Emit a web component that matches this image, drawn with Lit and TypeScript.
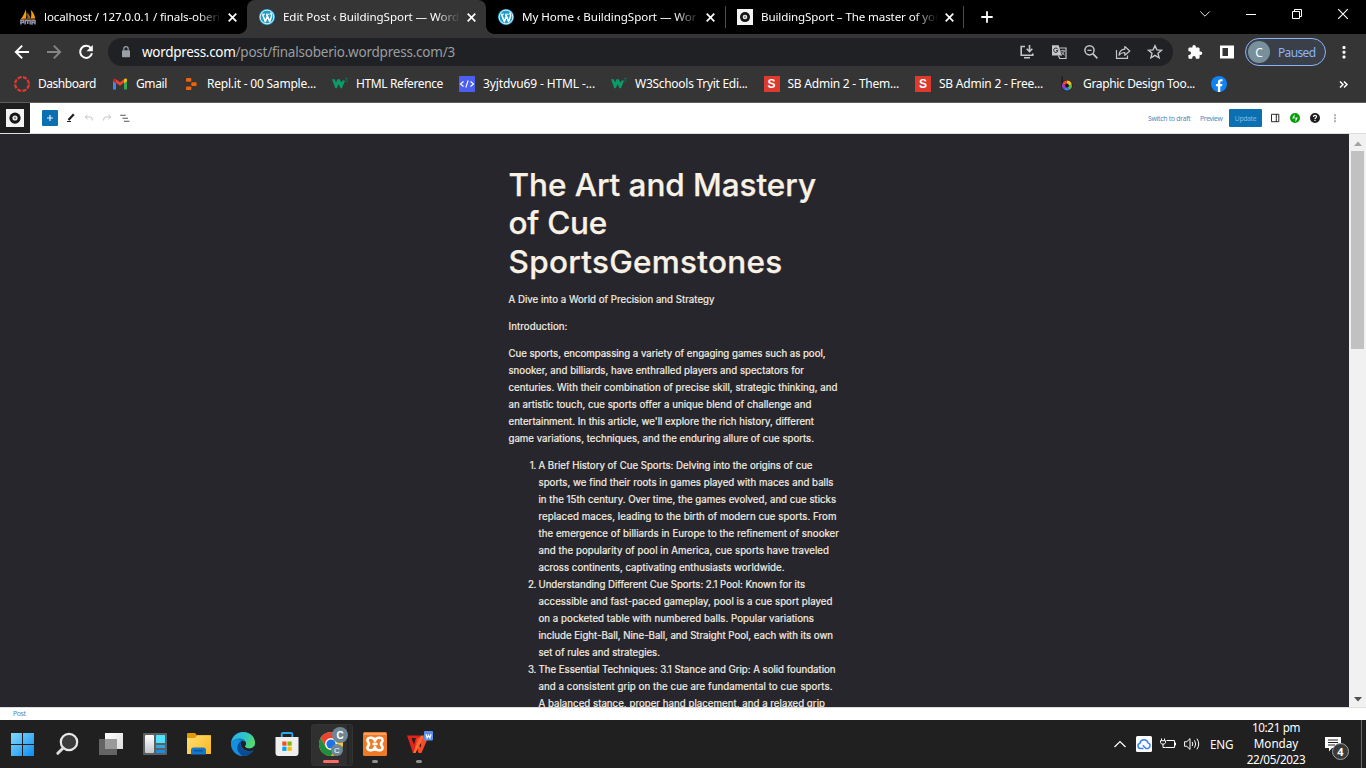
import { LitElement, html, css, svg, nothing } from 'lit';
import { customElement, property, query } from 'lit/decorators.js';

/** Single line of text tracked so that it spans exactly `w` pixels. */
@customElement('fit-text')
export class FitText extends LitElement {
  @property({ type: Number }) w = 0;
  @property() text = '';
  @query('span') private line!: HTMLSpanElement;

  static styles = css`
    :host { display: block; white-space: pre; flex: none; }
  `;

  updated() {
    this.line.style.letterSpacing = '0px';
    const natural = this.line.getBoundingClientRect().width;
    const count = [...this.text].length;
    this.line.style.letterSpacing = `${(this.w - natural) / count}px`;
    this.style.width = `${this.w}px`;
  }

  render() {
    return html`<span>${this.text}</span>`;
  }
}

const fit = (text: string, w: number, cls = '') =>
  html`<fit-text class=${cls} .text=${text} .w=${w}></fit-text>`;

const icon = (w: number, h: number, body: unknown, vb?: string) =>
  html`<svg class="ic" width=${w} height=${h} viewBox=${vb ?? `0 0 ${w} ${h}`} fill="none">${body}</svg>`;

const wpIcon = icon(16, 16, svg`
  <circle cx="8" cy="8" r="8" fill="#1e9ccb"/>
  <circle cx="8" cy="8" r="6.9" fill="none" stroke="#fff" stroke-width=".9"/>
  <path d="M2.6 5.2H6M7 5.2h3.6" stroke="#fff" stroke-width="1"/>
  <path d="M3.6 5.4 6.3 12.8 8.3 7.2 7.6 5.4M8.3 6.4 10.6 12.8 12.5 7.2C13 5.4 11.6 5.2 11.8 3.6" stroke="#fff" stroke-width="1.5" stroke-linejoin="round"/>`);

const ballIcon = (s: number) => icon(s, s, svg`
  <rect width="16" height="16" fill="#f4f4f4"/>
  <circle cx="8" cy="8.1" r="5" fill="#151515"/>
  <circle cx="8" cy="8" r="2.3" fill="#e9e9e9"/>
  <ellipse cx="8" cy="8" rx=".8" ry="1.2" fill="#777"/>`, '0 0 16 16');

const pmaIcon = icon(16, 16, svg`
  <path d="M5.6 .8C4.800 4 3 7 1 9.900l4.800-.4C6.800 6.500 6.600 3.500 5.600.800Z" fill="#f89c0e"/>
  <path d="M7.200 3.500 7.500 9.500l2.800-.2C10 7 8.800 5 7.200 3.500Z" fill="#a86a20"/>
  <path d="M10.600.800C11.600 3.500 11.500 6.500 10.800 9.500l4.400-.3C14.600 6 13 3 10.600.800Z" fill="#f89c0e"/>
  <path d="M.9 15.600V11.300h2.500v2.300H.9M5.200 15.600V11.400h5v4.200M7.700 11.500v3.500M12 15.800v-4.400h3v4.200M12 13.600h3" stroke="#8f91ad" stroke-width="1.500"/>
  <path d="M1 10h14" stroke="#d8872a" stroke-width=".8"/>`);

const closeIcon = icon(9, 9, svg`<path d="M.7.700 8.300 8.300M8.300.700.7 8.300" stroke="#fff" stroke-width="1.700"/>`);

const w3Icon = icon(16, 16, svg`
  <path d="M0 3.300h2.600l1.500 3.200 1.300-3.200h2.400l1.500 3.200L10.500 4.500h2.600L10 12.300H8.600L6.700 8.300l-2 4H3.300Z" fill="#0a9c68"/>
  <path d="M13 2.300h2.200L14.200 3.800q1.400.100 1.100 1.200-.5 1-2 .500" stroke="#08784f" stroke-width=".9"/>`);

const sIcon = html`<span class="sico">S</span>`;

const bookmarks: { label: string; w: number; icon: unknown }[] = [
  {
    label: 'Dashboard', w: 58,
    icon: icon(16, 16, svg`<circle cx="8" cy="8" r="6.900" stroke="#e23a30" stroke-width="2.200" stroke-dasharray="4.100 1.319" transform="rotate(6 8 8)"/>`),
  },
  {
    label: 'Gmail', w: 31,
    icon: icon(16, 16, svg`
      <path d="M1 13.500V4.500l3 2.200v6.800Z" fill="#4285f4"/><path d="M12 13.500V6.700l3-2.200v9Z" fill="#34a853"/>
      <path d="M4 6.800V3.300l4 3 4-3v3.500L8 9.800Z" fill="#ea4335"/>
      <path d="M1 5.200V4c0-1.600 1.700-1.900 3-.700v3.900Z" fill="#c5221f"/><path d="M15 5.200V4c0-1.600-1.700-1.900-3-.700v3.900Z" fill="#fbbc04"/>`),
  },
  {
    label: 'Repl.it - 00 Sample...', w: 109,
    icon: icon(16, 16, svg`<g fill="#f26207"><rect x="3" y="2" width="5.300" height="3.700" rx=".9"/><rect x="8.300" y="6.200" width="5.300" height="3.700" rx=".9"/><rect x="3" y="10.400" width="5.300" height="3.700" rx=".9"/></g>`),
  },
  { label: 'HTML Reference', w: 87, icon: w3Icon },
  {
    label: '3yjtdvu69 - HTML -...', w: 112,
    icon: icon(16, 16, svg`<rect width="16" height="16" rx="1" fill="#4d5ff0"/><path d="M4.500 5.500 1.500 8l3 2.500M11.500 5.500l3 2.500-3 2.500M9.200 4.500l-2.400 7" stroke="#fff" stroke-width="1.100"/>`),
  },
  { label: 'W3Schools Tryit Edi...', w: 112.5, icon: w3Icon },
  { label: 'SB Admin 2 - Them...', w: 111.5, icon: sIcon },
  { label: 'SB Admin 2 - Free...', w: 104, icon: sIcon },
  {
    label: 'Graphic Design Too...', w: 112,
    icon: icon(16, 16, svg`
      <path d="M3.200.500V9" stroke="#17191d" stroke-width="1.300"/><circle cx="8" cy="9.600" r="5.600" fill="#17191d"/>
      <g stroke-width="3" fill="none">
      <path d="M8 6.100A3.500 3.500 0 0 1 11.400 8.800" stroke="#f5c518"/><path d="M11.400 8.800A3.500 3.500 0 0 1 9.600 12.700" stroke="#57b947"/>
      <path d="M9.600 12.700A3.500 3.500 0 0 1 5.600 12.100" stroke="#3d7fe0"/><path d="M5.600 12.100A3.500 3.500 0 0 1 4.800 8.200" stroke="#a23bc4"/>
      <path d="M4.800 8.200A3.500 3.500 0 0 1 8 6.100" stroke="#ee4b2b"/></g>`),
  },
  {
    label: '', w: 0,
    icon: icon(16, 16, svg`<circle cx="8" cy="8" r="8" fill="#0f82f5"/><path d="M6.900 16V10.300H4.900V8h2V6.400C6.900 4.300 8.100 3.200 10 3.200l1.600.1v2h-1c-1 0-1.300.5-1.300 1.200V8h2.200l-.4 2.300H9.300V16Z" fill="#fff"/>`),
  },
];

const tabs = [
  { label: 'localhost / 127.0.0.1 / finals-oberi', w: 176, icon: pmaIcon, cls: '' },
  { label: 'Edit Post ‹ BuildingSport — Word', w: 176, icon: wpIcon, cls: 'active' },
  { label: 'My Home ‹ BuildingSport — Wor', w: 174.5, icon: wpIcon, cls: '' },
  { label: 'BuildingSport – The master of you', w: 181, icon: ballIcon(16), cls: 'sep' },
];

const omniIcons = [
  icon(16, 16, svg`<path d="M6 2.500H2.200v8.700h11.600V9.500M5 13.800h6" stroke="#c4c6c9" stroke-width="1.600"/><path d="M10.500 1v6.500M7.700 4.800l2.800 2.900 2.800-2.900" stroke="#c4c6c9" stroke-width="1.600"/>`),
  icon(16, 16, svg`<path d="M1 1.200h6.700l3 10.300H1Z" fill="#c4c6c9"/><path d="M8.500 4H15v10.500H8.700l-1.300-3" stroke="#c4c6c9" stroke-width="1.200"/><path d="M6.800 5.200A2.200 2.200 0 1 0 7 6.700H5" stroke="#202124" stroke-width="1"/><path d="M9.500 6.800h4.500M11.700 5.800v1M13.200 7c-.4 2-1.600 3.400-3 4.200M10.600 8c.6 1.400 1.700 2.400 3 3" stroke="#c4c6c9" stroke-width=".9"/>`),
  icon(16, 16, svg`<circle cx="6.500" cy="6.300" r="4.600" stroke="#c4c6c9" stroke-width="1.500"/><path d="M9.800 9.700 14.400 14.300" stroke="#c4c6c9" stroke-width="1.800"/><path d="M4.400 6.300h4.200" stroke="#c4c6c9" stroke-width="1.200"/>`),
  icon(16, 16, svg`<path d="M1.500 6v8.300h11V11.500" stroke="#c4c6c9" stroke-width="1.200"/><path d="M4 11.200C4.300 7.500 6.600 5.500 9.800 5.200V2.500l5 4.500-5 4.300V8.500C7.300 8.500 5.400 9.300 4 11.200Z" stroke="#c4c6c9" stroke-width="1.200" stroke-linejoin="round"/>`),
  icon(16, 16, svg`<path d="m8 1.700 1.900 4.200 4.600.4-3.500 3 1.100 4.500L8 11.400l-4.100 2.400L5 9.300l-3.500-3 4.600-.4Z" stroke="#c4c6c9" stroke-width="1.400"/>`),
];

const para: [string, number][] = [
  ['Cue sports, encompassing a variety of engaging games such as pool,', 317],
  ['snooker, and billiards, have enthralled players and spectators for', 295.5],
  ['centuries. With their combination of precise skill, strategic thinking, and', 329],
  ['an artistic touch, cue sports offer a unique blend of challenge and', 303],
  ["entertainment. In this article, we'll explore the rich history, different", 305.5],
  ['game variations, techniques, and the enduring allure of cue sports.', 305.5],
];

const items: [string, number][][] = [
  [
    ['A Brief History of Cue Sports: Delving into the origins of cue', 274],
    ['sports, we find their roots in games played with maces and balls', 295],
    ['in the 15th century. Over time, the games evolved, and cue sticks', 297.5],
    ['replaced maces, leading to the birth of modern cue sports. From', 298],
    ['the emergence of billiards in Europe to the refinement of snooker', 300.5],
    ['and the popularity of pool in America, cue sports have traveled', 290.5],
    ['across continents, captivating enthusiasts worldwide.', 246],
  ],
  [
    ['Understanding Different Cue Sports: 2.1 Pool: Known for its', 266.5],
    ['accessible and fast-paced gameplay, pool is a cue sport played', 294],
    ['on a pocketed table with numbered balls. Popular variations', 275.5],
    ['include Eight-Ball, Nine-Ball, and Straight Pool, each with its own', 294.5],
    ['set of rules and strategies.', 121.5],
  ],
  [
    ['The Essential Techniques: 3.1 Stance and Grip: A solid foundation', 297],
    ['and a consistent grip on the cue are fundamental to cue sports.', 294],
    ['A balanced stance, proper hand placement, and a relaxed grip', 286.5],
  ],
];

const taskIcons: { body: unknown; cls?: string }[] = [
  {
    body: icon(24, 24, svg`
      <defs><linearGradient id="win" x1="0" y1="0" x2="24" y2="24" gradientUnits="userSpaceOnUse"><stop stop-color="#86dcfb"/><stop offset="1" stop-color="#0a8bf2"/></linearGradient></defs>
      <path d="M0 1h11v11H0ZM12 1h11v11H12ZM0 13h11v11H0ZM12 13h11v11H12Z" fill="url(#win)"/>`),
  },
  { body: icon(24, 24, svg`<circle cx="14" cy="10" r="8.200" fill="#3b3b3b" stroke="#e8e8e8" stroke-width="2.200"/><path d="M8.200 16 2.800 21.300" stroke="#dcdcdc" stroke-width="3" stroke-linecap="round"/>`) },
  {
    body: icon(24, 24, svg`
      <defs><linearGradient id="tv" x1="6" y1="0" x2="24" y2="17" gradientUnits="userSpaceOnUse"><stop stop-color="#fff"/><stop offset="1" stop-color="#dcdcdc"/></linearGradient></defs>
      <rect x="0" y="7" width="18" height="16" fill="#646464"/><rect x="6" y="1" width="18" height="16" fill="url(#tv)"/><rect x="6" y="7" width="12" height="10" fill="#9a9a9a"/>`),
  },
  {
    body: icon(24, 24, svg`
      <defs><linearGradient id="wd" x1="0" y1="3" x2="0" y2="21" gradientUnits="userSpaceOnUse"><stop stop-color="#fff"/><stop offset="1" stop-color="#c2c8cd"/></linearGradient></defs>
      <rect y="1" width="24" height="22" rx="1" fill="#5d6063"/><rect x="2" y="3" width="9" height="18" rx="1" fill="url(#wd)"/>
      <rect x="13" y="3" width="9" height="8" rx=".5" fill="#4fe3ff"/><rect x="13" y="13" width="9" height="3" rx=".5" fill="#2fa8e6"/><rect x="13" y="18" width="9" height="3" rx=".5" fill="#188fe0"/>`),
  },
  {
    body: icon(24, 24, svg`
      <defs><linearGradient id="fl" x1="0" y1="3" x2="24" y2="22" gradientUnits="userSpaceOnUse"><stop stop-color="#ffdf76"/><stop offset="1" stop-color="#fbb81e"/></linearGradient></defs>
      <path d="M0 2a1 1 0 0 1 1-1h7l2 2.300h13a1 1 0 0 1 1 1V8H0Z" fill="#e09a05"/>
      <path d="M0 6h8l2.200-2.700H24V22H0Z" fill="url(#fl)"/><path d="M4 22.500V18a2.500 2.500 0 0 1 2.500-2.500h10A2.500 2.500 0 0 1 19 18v4.500Z" fill="#1278cf"/><path d="M7 18.700h9" stroke="#0c5596" stroke-width="1.500"/>`),
  },
  {
    body: icon(24, 24, svg`
      <defs><linearGradient id="e1" x1="3" y1="2" x2="24" y2="14" gradientUnits="userSpaceOnUse"><stop stop-color="#2fb4e8"/><stop offset=".5" stop-color="#2fc7bc"/><stop offset="1" stop-color="#63e04d"/></linearGradient></defs>
      <circle cx="12" cy="12" r="12" fill="#0f6fc4"/>
      <path d="M.1 10.500C1.500 3.500 6.500 0 12.200 0 19.500 0 24 5.300 24 10.800c0 3.500-2.700 5.700-6 5.700-2.800 0-4.300-1.200-4-2.300.3-.9 1-1.300 1-2.800 0-2.500-2.500-4.800-6.600-4.800C4.600 6.600 1.500 8.500.1 10.500Z" fill="url(#e1)"/>
      <path d="M.1 10.500C-.5 17 4.500 23.900 12 24c-3.800-1.500-6-5-5.500-9 .3-3 2-5 4-6C7 5.700 1.800 8 .1 10.500Z" fill="#1590dd"/>
      <path d="M10.300 9.300c-2.500 5 1 9.900 6.300 9.900 2.500 0 4.500-.8 6.200-2C21 21 17 24 12 24 8.500 22.500 6.200 19 6.500 15c.2-2.700 1.700-4.900 3.800-5.700Z" fill="#0b4a94"/>
      <path d="M10.400 9.200C11.800 8.800 15 9.300 15 11.500c0 1.500-1 2-1 2.800 0 1.300 2 2.200 4 2.200 2 0 4-.6 5.400-2.500l2 1.500-2.500 2.300c-1.500.9-3.500 1.400-5.500 1.300-5-.3-9-5-7-9.900Z" fill="#202020"/>`),
  },
  {
    body: icon(24, 24, svg`
      <path d="M6.700 6.500V2.200A1.200 1.200 0 0 1 7.900 1h8.200a1.200 1.200 0 0 1 1.200 1.200v4.300" stroke="#28a9ea" stroke-width="1.900"/>
      <path d="M.5 5h23v16a3 3 0 0 1-3 3h-17a3 3 0 0 1-3-3Z" fill="#efefef"/>
      <path d="M7.300 9.500h4.200v4.200H7.300Z" fill="#f25022"/><path d="M12.500 9.500h4.200v4.200h-4.200Z" fill="#7fba00"/><path d="M7.300 14.700h4.200v4.200H7.300Z" fill="#00a4ef"/><path d="M12.500 14.700h4.200v4.200h-4.200Z" fill="#ffb900"/>`),
  },
  {
    cls: 'current',
    body: html`<span class="chrome">${icon(24, 24, svg`
      <circle cx="12" cy="12" r="12" fill="#fcc934"/>
      <path d="M1.600 6A12 12 0 0 1 22.400 6H12a6 6 0 0 0-5.200 9Z" fill="#ea4335"/>
      <path d="M1.600 6A12 12 0 0 0 12 24l5.200-9A6 6 0 0 1 6.800 15Z" fill="#1e8e3e"/>
      <circle cx="12" cy="12" r="5.800" fill="#fff"/><circle cx="12" cy="12" r="4.600" fill="#1a73e8"/>`)}
      <b class="av big">C</b><b class="av small">C</b></span>`,
  },
  {
    cls: 'open',
    body: icon(24, 24, svg`
      <rect width="24" height="24" rx="1.500" fill="#ee7a26"/><rect x="1" y="1" width="22" height="2" fill="#f6a269"/>
      <path d="M12 9C12 5.500 4.500 4.200 4.500 8.200c0 2 1.500 2.300 1.500 3.800s-1.500 1.800-1.500 3.800c0 4 7.500 2.700 7.500-.8 0 3.500 7.500 4.800 7.500.8 0-2-1.500-2.300-1.500-3.800s1.500-1.800 1.500-3.800C19.500 4.200 12 5.500 12 9ZM9.500 12h5" stroke="#fff" stroke-width="2.700" stroke-linejoin="round"/>`),
  },
  {
    cls: 'open',
    body: icon(24, 24, svg`
      <path d="M0 3.500h13l1.500 3.500-2.700 6L8.500 21H6Z" fill="#e2231a"/>
      <path d="M4.500 6h4.300L7 12.500Z" fill="#202020"/>
      <path d="M10 6.500 17 4.500h4.500L14.500 21h-3L10.300 16.500 6.800 21Z" fill="#fb4b26"/>
      <path d="M6 21 13.800 3.500h3.400L8.500 21Z" fill="#ff6a2e"/><path d="m12.600 13.500 1-2.500.5 2.500-1 2.500Z" fill="#202020"/>
      <rect x="17" y="-1" width="9" height="9.500" rx="1" fill="#5b8def"/><path d="m19 2.200 1.100 4 1.400-3 1.400 3 1.100-4" stroke="#fff" stroke-width="1.100"/>`),
  },
];

@customElement('app-root')
export class AppRoot extends LitElement {
  static styles = css`
    :host {
      display: flex; flex-direction: column; width: 1366px; height: 768px; overflow: hidden;
      font-family: 'Noto Sans', 'Open Sans', sans-serif; font-size: 11.6px; color: #fff; background: #fff;
    }
    * { box-sizing: border-box; }
    .ic { display: block; flex: none; overflow: visible; }

    .tabs { display: flex; height: 34px; background: #000; padding-left: 8px; flex: none; }
    .tab { width: 239px; display: flex; align-items: center; padding-left: 12px; position: relative; flex: none; }
    .tab .label { width: 176px; margin: 0 7.5px 0 8px; overflow: hidden; line-height: 20px;
      mask-image: linear-gradient(90deg, #000 153px, transparent 177px); }
    .tab.active { background: #353535; border-radius: 8px 8px 0 0; }
    .tab.active::before, .tab.active::after { content: ''; position: absolute; bottom: 0; width: 8px; height: 8px; }
    .tab.active::before { left: -8px; background: radial-gradient(circle at 0 0, transparent 7.5px, #353535 8px); }
    .tab.active::after { right: -8px; background: radial-gradient(circle at 100% 0, transparent 7.5px, #353535 8px); }
    .tab.sep { border-left: 1px solid #4a4a4a; border-right: 1px solid #4a4a4a; padding-left: 11px;
      border-image: linear-gradient(transparent 7px, #4d4d4d 7px, #4d4d4d 27px, transparent 27px) 1; }
    .plus { padding: 10.5px 0 0 17px; }
    .win { margin-left: auto; display: flex; }
    .win > span { width: 46px; height: 28px; display: grid; place-items: center; }

    .toolbar { height: 36px; background: #353535; display: flex; align-items: center; flex: none; padding-left: 14px; }
    .nav { display: flex; gap: 16px; }
    .omni { width: 1065px; height: 28px; border-radius: 14px; background: #202124; margin-left: 14px; display: flex;
      align-items: center; padding: 0 10px 0 12px; font-size: 13.5px; }
    .omni .lock { margin-right: 10px; }
    .omni .rest { color: #9a9da1; }
    .omni .acts { margin-left: auto; display: flex; gap: 16px; }
    .ext { display: flex; gap: 16px; margin-left: 14px; }
    .pill { width: 81px; height: 28px; border: 1px solid #8ab4f8; border-radius: 14px; background: #3b3f47;
      margin-left: 10px; display: flex; align-items: center; color: #8ab4f8; font-size: 12px; }
    .pill b { width: 22px; height: 22px; border-radius: 50%; background: #78909c; color: #fff; font-weight: 400;
      display: grid; place-items: center; margin: 0 8px 0 2px; font-size: 12px; }
    .dots { margin-left: 16px; }

    .marks { height: 32px; background: #353535; display: flex; align-items: center; gap: 16px; padding: 1px 0 5px 14px;
      flex: none; font-size: 12px; }
    .chromeline { height: 1px; background: #5c5c5c; flex: none; }
    .mark { display: flex; align-items: center; gap: 8px; line-height: 18px; }
    .sico { width: 16px; height: 16px; background: #dd3a30; display: grid; place-items: center; font: bold 12px/16px 'Liberation Sans', sans-serif; }
    .more { margin-left: auto; padding-right: 18px; }

    .editbar { height: 31px; border-bottom: 1px solid #dedede; background: #fff; display: flex; align-items: center;
      flex: none; font-size: 6.8px; color: #4a8abb; }
    .site { width: 30px; height: 30px; background: #1e1e1e; display: grid; place-items: center; }
    .add { width: 16px; height: 16px; background: #0a70b1; margin: 0 7px 0 12px; border-radius: 1px; }
    .tools { display: flex; gap: 6px; }
    .right { margin-left: auto; display: flex; align-items: center; padding-right: 25px; }
    .links { display: flex; gap: 9.5px; }
    .update { width: 33px; height: 18px; background: #0a70b1; border-radius: 1px; color: #7fbbe2; display: grid; place-items: center; margin: 0 7px 0 6.5px; }
    .right .acts { display: flex; gap: 8px; }

    .main { flex: 1; min-height: 0; display: flex; background: #28262d; overflow: hidden; }
    .canvas { flex: 1; overflow: hidden; padding: 31.5px 0 0 508.5px; font-family: Inter, sans-serif; color: #f3eee2;
      font-size: 9.7px; line-height: 17px; -webkit-text-stroke: .2px #f3eee2; }
    .title { font-size: 31.5px; font-weight: 500; line-height: 38.5px; margin-bottom: 10px; -webkit-text-stroke: .25px #f8f1e6; color: #f8f1e6; }
    .block { margin-bottom: 10px; }
    .item { display: grid; grid-template-columns: 27.5px auto; column-gap: 2.5px; }
    .num { text-align: right; letter-spacing: -.3px; }
    .scroll { width: 17px; background: #f1f1f1; display: flex; flex-direction: column; align-items: center; justify-content: space-between; padding: 7px 0 5px; }
    .thumb { width: 13px; height: 198px; background: #c1c1c1; margin: 5px 0 auto; }

    .foot { height: 13px; border-top: 1px solid #dedede; background: #fff; color: #4a8abb; font-size: 6.8px; line-height: 12px; padding-left: 13px; flex: none; }

    .task { height: 48px; background: #202020; display: flex; flex: none; padding-left: 1px; }
    .app { width: 44px; height: 48px; position: relative; display: grid; place-items: center; flex: none; }
    .app::after { content: ''; position: absolute; bottom: 5px; height: 3px; border-radius: 2px; background: #8f8f8f; width: 0; }
    .app.open::after { width: 6px; }
    .app.current::after { width: 16px; background: #ff6a66; }
    .app.current::before { content: ''; position: absolute; left: 2px; top: 4px; width: 40px; height: 40px; border-radius: 3px;
      background: linear-gradient(90deg, #303030 35px, #202020 35px, #2a2a2a 37px); border: 1px solid #333; }
    .chrome { position: relative; display: block; }
    .av { position: absolute; border-radius: 50%; background: #6f8794; color: #fff; display: grid; place-items: center; font-family: 'Liberation Sans', sans-serif; }
    .av.big { width: 16px; height: 16px; right: -5px; top: -5px; font-size: 10px; }
    .av.small { width: 12px; height: 12px; right: 0; top: 12px; font-size: 8px; font-weight: 400; }
    .tray { margin-left: auto; display: flex; align-items: center; line-height: 16px; font-size: 11.7px; }
    .status { display: flex; align-items: center; gap: 8px; margin: 0 9.5px 0 10px; }
    .lang { padding-bottom: 1px; }
    .clock { display: flex; flex-direction: column; align-items: center; width: 60px; margin-left: 12.5px; padding-bottom: 2px; }
    .notif { position: relative; margin-left: 19px; }
    .notif b { position: absolute; left: 7px; top: 7px; width: 17px; height: 17px; border-radius: 50%; background: #3a3a3a;
      border: 1px solid #a0a0a0; display: grid; place-items: center; font-size: 11px; line-height: 15px; }
    .edge { width: 1px; height: 48px; background: #6a6a6a; margin: 0 4px 0 20px; }
  `;

  private renderTabs() {
    return html`<div class="tabs">
      ${tabs.map(t => html`<div class="tab ${t.cls}">${t.icon}<div class="label">${fit(t.label, t.w)}</div>${closeIcon}</div>`)}
      <div class="plus">${icon(12, 12, svg`<path d="M6 .3v11.400M.3 6h11.400" stroke="#fff" stroke-width="1.800"/>`)}</div>
      <div class="win">
        <span>${icon(10, 6, svg`<path d="M.3.500 5 5.200 9.700.500" stroke="#e6e6e6"/>`)}</span>
        <span>${icon(10, 10, svg`<path d="M0 5.500h10" stroke="#fff"/>`)}</span>
        <span>${icon(10, 10, svg`<path d="M.5 2.500h7v7h-7ZM2.500 2.500v-2h7v7h-2" stroke="#fff"/>`)}</span>
        <span>${icon(10, 10, svg`<path d="m.2.200 9.600 9.600M9.800.200.2 9.800" stroke="#fff" stroke-width="1.100"/>`)}</span>
      </div>
    </div>`;
  }

  private renderToolbar() {
    return html`<div class="toolbar">
      <div class="nav">
        ${icon(16, 16, svg`<path d="M15 8H2M8.200 1.600 1.800 8l6.400 6.400" stroke="#fff" stroke-width="1.900"/>`)}
        ${icon(16, 16, svg`<path d="M1 8h13M7.800 1.600 14.200 8l-6.400 6.400" stroke="#858585" stroke-width="1.900"/>`)}
        ${icon(16, 16, svg`<path d="M13 4.300A6 6 0 1 0 14 9.300" stroke="#fff" stroke-width="2"/><path d="M14.800.900v6.300H8.500Z" fill="#fff"/>`)}
      </div>
      <div class="omni">
        <span class="lock">${icon(12, 12, svg`<rect x="2" y="4.300" width="8" height="7" rx=".8" fill="#9aa0a6"/><path d="M3.800 4.500V2.900a2.200 2.200 0 0 1 4.400 0v1.600" stroke="#9aa0a6" stroke-width="1.200"/>`)}</span>
        ${fit('wordpress.com', 93.5)}${fit('/post/finalsoberio.wordpress.com/3', 219.5, 'rest')}
        <div class="acts">${omniIcons}</div>
      </div>
      <div class="ext">
        ${icon(16, 16, svg`<path d="M13.600 7.500h-1V4.800c0-.7-.6-1.300-1.300-1.300H8.800V2.600a1.700 1.700 0 0 0-3.400 0v.9H2.700c-.7 0-1.300.6-1.300 1.300v2.500h.9a1.800 1.800 0 0 1 0 3.600h-.9v2.600c0 .7.6 1.300 1.300 1.300h2.500v-.9a1.800 1.800 0 0 1 3.600 0v.9h2.500c.7 0 1.300-.6 1.300-1.300v-2.600h1a1.700 1.700 0 0 0 0-3.400Z" fill="#fff"/>`)}
        ${icon(16, 16, svg`<path d="M1 1.500h14v13H1ZM3.500 4v8h5.500V4Z" fill="#fff" fill-rule="evenodd"/>`)}
      </div>
      <div class="pill"><b>C</b>${fit('Paused', 37.5)}</div>
      <div class="dots">${icon(4, 14, svg`<g fill="#fff"><rect x=".5" y="1" width="3" height="3" rx="1"/><rect x=".5" y="5.700" width="3" height="3" rx="1"/><rect x=".5" y="10.400" width="3" height="3" rx="1"/></g>`)}</div>
    </div>`;
  }

  private renderBookmarks() {
    return html`<div class="marks">
      ${bookmarks.map(b => html`<div class="mark">${b.icon}${b.label ? fit(b.label, b.w) : nothing}</div>`)}
      <div class="more">${icon(9, 7, svg`<path d="m1 .500 3 3-3 3M5 .500l3 3-3 3" stroke="#fff" stroke-width="1.500"/>`)}</div>
    </div><div class="chromeline"></div>`;
  }

  private renderEditBar() {
    return html`<div class="editbar">
      <div class="site">${ballIcon(18)}</div>
      <div class="add">${icon(16, 16, svg`<path d="M8 5v6M5 8h6" stroke="#e3f0f9" stroke-width="1.200"/>`)}</div>
      <div class="tools">
        ${icon(12, 12, svg`<path d="M3.500 8 8.800 2.200" stroke="#1e1e1e" stroke-width="2.200"/><path d="M2 9.500h4" stroke="#1e1e1e" stroke-width="1"/>`)}
        ${icon(12, 12, svg`<path d="M4.500 2.800 2.200 5l2.300 2.200M2.300 5h5q2.200.200 2.200 3.500" stroke="#c4c4c4" stroke-width="1"/>`)}
        ${icon(12, 12, svg`<path d="M7.500 2.800 9.800 5 7.500 7.200M9.700 5h-5Q2.500 5.200 2.500 8.500" stroke="#c4c4c4" stroke-width="1"/>`)}
        ${icon(12, 12, svg`<path d="M1.200 3.200h5.500M3.500 6.200h5.500M5 9.200h5.500" stroke="#555" stroke-width="1.100"/>`)}
      </div>
      <div class="right">
        <div class="links">${fit('Switch to draft', 42.5)}${fit('Preview', 22.5)}</div>
        <div class="update">${fit('Update', 21.5)}</div>
        <div class="acts">
          ${icon(12, 12, svg`<path d="M2.500 2.300h7.300v7.400H2.500ZM7.300 2v8" stroke="#2b2b2b" stroke-width="1"/>`)}
          ${icon(12, 12, svg`<circle cx="6" cy="6" r="5" fill="#069e08"/><path d="M5.500 2v4.500H3.200ZM6.500 10V5.500h2.300Z" fill="#fff"/>`)}
          ${icon(12, 12, svg`<circle cx="6" cy="6" r="5" fill="#1e1e1e"/><path d="M4.400 4.900q.1-1.500 1.600-1.500 1.600 0 1.600 1.300c0 1-1.600 1-1.600 2.200M6 7.700v1.200" stroke="#fff" stroke-width="1.200"/>`)}
          ${icon(12, 12, svg`<path d="M6 2.200v2M6 5.200v2M6 8.200v2" stroke="#a8a8a8" stroke-width="1.800"/>`)}
        </div>
      </div>
    </div>`;
  }

  private renderMain() {
    return html`<div class="main">
      <div class="canvas">
        <div class="title">${fit('The Art and Mastery', 307.5)}${fit('of Cue', 98.5)}${fit('SportsGemstones', 274)}</div>
        <div class="block">${fit('A Dive into a World of Precision and Strategy', 206)}</div>
        <div class="block">${fit('Introduction:', 59)}</div>
        <div class="block">${para.map(([t, w]) => fit(t, w))}</div>
        ${items.map((lines, i) => html`<div class="item"><div class="num">${i + 1}.</div><div>${lines.map(([t, w]) => fit(t, w))}</div></div>`)}
      </div>
      <div class="scroll">
        ${icon(8, 5, svg`<path d="M0 5 4 .500 8 5Z" fill="#a3a3a3"/>`)}
        <div class="thumb"></div>
        ${icon(8, 5, svg`<path d="m0 0 4 4.500L8 0Z" fill="#505050"/>`)}
      </div>
    </div>
    <div class="foot">${fit('Post', 12.5)}</div>`;
  }

  private renderTaskbar() {
    return html`<div class="task">
      ${taskIcons.map(a => html`<div class="app ${a.cls ?? ''}">${a.body}</div>`)}
      <div class="tray">
        ${icon(12, 8, svg`<path d="m.5 7 5.500-5.500L11.500 7" stroke="#fff" stroke-width="1.200"/>`)}
        <div class="status">
          ${icon(16, 16, svg`<rect width="16" height="16" rx="1.500" fill="#fff"/><path d="M7.500 12.500H4.300a2.700 2.700 0 0 1-.3-5.300 4.100 4.100 0 0 1 8-.3 2.900 2.900 0 0 1-.2 5.600H10L6.700 9.300" stroke="#3b82f0" stroke-width="1.500"/>`)}
          ${icon(16, 12, svg`<path d="M6.500 2.500h8v7H5.500M15.500 4.500v3" stroke="#fff"/><path d="M1.500.500v2M4.500.500v2M.5 2.700h5v2q-.5 1.500-2.500 1.500T.5 4.700ZM3 6v3.500h2.500" stroke="#fff"/>`)}
          ${icon(17, 14, svg`<path d="M.6 4.700h2.200L6 1.600v10.800L2.800 9.300H.6ZM8.200 5q1.200 2 0 4M10.500 3.300q2.400 3.700 0 7.400M13 1.700q3.400 5.300 0 10.600" stroke="#fff" stroke-width="1"/>`)}
        </div>
        <div class="lang">${fit('ENG', 23.5)}</div>
        <div class="clock">${fit('10:21 pm', 48)}${fit('Monday', 44.5)}${fit('22/05/2023', 58.5)}</div>
        <div class="notif">${icon(16, 16, svg`<path d="M0 1h16v11H7l-3 3.500V12H0Z" fill="#fff"/><path d="M3 4h10M3 6.500h10M3 9h7" stroke="#202020"/>`)}<b>4</b></div>
        <div class="edge"></div>
      </div>
    </div>`;
  }

  render() {
    return html`${this.renderTabs()}${this.renderToolbar()}${this.renderBookmarks()}${this.renderEditBar()}${this.renderMain()}${this.renderTaskbar()}`;
  }
}
